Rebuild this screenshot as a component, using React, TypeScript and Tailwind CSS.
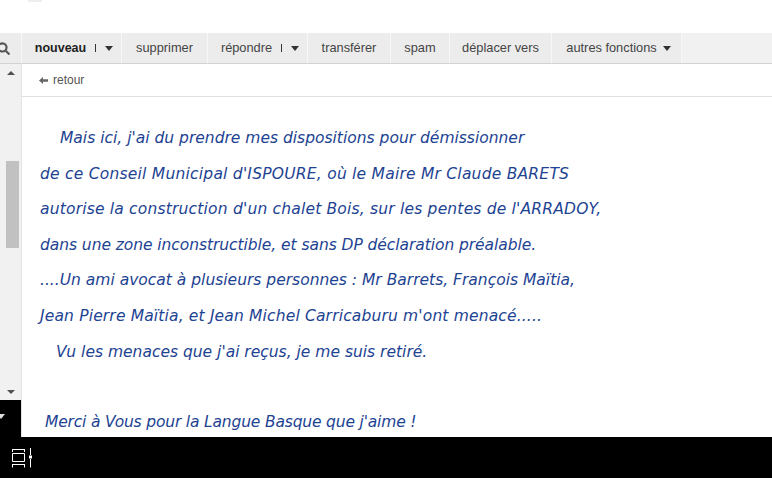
const tabs = [
  { label: 'nouveau', w: 'w-[99px] gap-[9px] pl-[5px]', bold: true, split: true },
  { label: 'supprimer', w: 'w-[85px]' },
  { label: 'répondre', w: 'w-[99px] gap-[9px] pl-[5px]', split: true },
  { label: 'transférer', w: 'w-[82px]' },
  { label: 'spam', w: 'w-[58px]' },
  { label: 'déplacer vers', w: 'w-[101px]' },
  { label: 'autres fonctions', w: 'w-[129px] gap-[6px] pl-[4px]', caret: true },
];

const lines = [
  { text: 'Mais ici, j\'ai du prendre mes dispositions pour démissionner', cls: 'pl-[20px]' },
  { text: 'de ce Conseil Municipal d\'ISPOURE, où le Maire Mr Claude BARETS', cls: 'tracking-[0.23px]' },
  { text: 'autorise la construction d\'un chalet Bois, sur les pentes de l\'ARRADOY,', cls: 'tracking-[0.19px]' },
  { text: 'dans une zone inconstructible, et sans DP déclaration préalable.', cls: 'tracking-[-0.06px]' },
  { text: '....Un ami avocat à plusieurs personnes : Mr Barrets, François Maïtia,', cls: '' },
  { text: 'Jean Pierre Maïtia, et Jean Michel Carricaburu m\'ont menacé.....', cls: 'tracking-[0.16px]' },
  { text: 'Vu les menaces que j\'ai reçus, je me suis retiré.', cls: 'pl-[16px]' },
];

const Caret = () => <span className="h-0 w-0 border-x-[4.5px] border-t-[5px] border-x-transparent border-t-[#333]" />;

export default function App() {
  return (
    <div className="flex h-[478px] w-[772px] flex-col overflow-hidden bg-white font-['Liberation_Sans',sans-serif]">
      <div className="h-[33px] shrink-0 bg-white">
        <div className="ml-[28px] h-[2px] w-[14px] bg-[#eeeeee]" />
      </div>
      <div className="flex h-[31px] shrink-0 gap-px border-b border-[#d2d2d2] bg-[#f7f7f7]">
        <div className="flex w-[21px] items-center overflow-hidden bg-[#ececec]">
          <svg width="13" height="13" viewBox="0 0 12 12" className="ml-[-3px]" fill="none" stroke="#555" strokeWidth="2">
            <circle cx="5" cy="5" r="3.8" />
            <path d="M8 8l3.5 3.5" />
          </svg>
        </div>
        {tabs.map((t) => (
          <div key={t.label} className={`flex items-center justify-center bg-[#ececec] ${t.w} ${t.bold ? 'text-[12.5px] font-bold text-[#222]' : 'text-[12.8px] text-[#444]'}`}>
            <span>{t.label}</span>
            {t.split && <span className="h-[8px] w-px bg-[#333]" />}
            {(t.split || t.caret) && <Caret />}
          </div>
        ))}
        <div className="flex-1 bg-[#f1f1f1]" />
      </div>
      <div className="flex min-h-0 flex-1">
        <div className="flex w-[22px] shrink-0 flex-col border-r border-[#e4e4e4] bg-white">
          <div className="flex h-[336px] flex-col bg-[#f1f1f1]">
            <div className="flex h-[17px] items-center justify-center">
              <span className="h-0 w-0 border-x-[4px] border-b-[4px] border-x-transparent border-b-[#505050]" />
            </div>
            <div className="mt-[80px] ml-[6px] h-[87px] w-[13px] bg-[#c1c1c1]" />
            <div className="flex-1" />
            <div className="flex h-[17px] items-center justify-center">
              <span className="h-0 w-0 border-x-[4px] border-t-[4px] border-x-transparent border-t-[#505050]" />
            </div>
          </div>
          <div className="flex h-[37px] items-start bg-black pt-[14px]">
            <span className="ml-[-3px] h-0 w-0 border-x-[4px] border-t-[5px] border-x-transparent border-t-[#ddd]" />
          </div>
        </div>
        <div className="min-w-0 flex-1">
          <div className="flex h-[33px] items-center gap-[5px] border-b border-[#e0e0e0] pl-[17px] text-[12px] text-[#555]">
            <svg width="9" height="7" viewBox="0 0 9 7" fill="#666"><path d="M0 3.5L4 0v2.3h5v2.4H4V7z" /></svg>
            <span>retour</span>
          </div>
          <div className="whitespace-nowrap pl-[18px] pt-[24px] font-['DejaVu_Sans',sans-serif] text-[15.5px] italic leading-[35.6px] text-[#1d4392]">
            {lines.map((l) => (
              <div key={l.text} className={l.cls}>{l.text}</div>
            ))}
            <div className="mt-[35px] pl-[5px] tracking-[-0.17px]">Merci à Vous pour la Langue Basque que j'aime !</div>
          </div>
        </div>
      </div>
      <div className="flex h-[41px] shrink-0 items-center bg-black pl-[12px]">
        <svg width="21" height="20" viewBox="0 0 21 20" fill="none" stroke="#fff" strokeWidth="1">
          <path d="M0 1.5h13M0.5 1v3M12.5 1v3M0.5 5.5h12v8h-12zM0 16.5h13M0.5 16v3.5M12.5 16v3.5M18.5 0v7M18.5 11v8.5" />
          <rect x="17" y="7.5" width="3" height="3" fill="#fff" stroke="none" />
        </svg>
      </div>
    </div>
  );
}
